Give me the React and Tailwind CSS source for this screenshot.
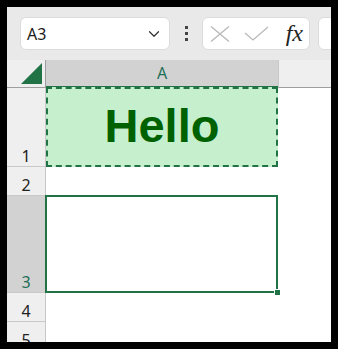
import { ChevronDown } from "lucide-react";

// Excel-style sheet: name box, formula bar, column A with a copied cell and a selected cell.
function RowHead({ n, active, className = "" }) {
  return (
    <div
      className={`flex items-end justify-center border-r border-b border-[#c8c8c8] pb-[1px] text-[16px] leading-none ${
        active ? "bg-[#d2d2d2] text-[#1e6f57]" : "bg-[#efefef] text-[#222]"
      } ${className}`}
    >
      <span className="mb-[1px]">{n}</span>
    </div>
  );
}

export default function App() {
  return (
    <div className="w-[338px] h-[349px] bg-black p-[7px] font-['Segoe_UI','Noto_Sans','Liberation_Sans',sans-serif]">
      <div className="w-[324px] h-[335px] overflow-hidden bg-white flex flex-col">
        {/* toolbar */}
        <div className="h-[53px] shrink-0 bg-[#e9e9e9] flex items-center pl-[13px]">
          <div className="shrink-0 w-[150px] h-[33px] bg-white rounded-[6px] border border-[#dcdcdc] flex items-center pl-[6px] pr-[6px] justify-between">
            <span className="text-[16px] text-[#1b1b1b]">A3</span>
            <ChevronDown size={18} strokeWidth={1.6} className="text-[#333]" />
          </div>
          <div className="shrink-0 w-[32px] flex flex-col items-center gap-[3px]">
            <span className="w-[3px] h-[3px] bg-[#444]" />
            <span className="w-[3px] h-[3px] bg-[#444]" />
            <span className="w-[3px] h-[3px] bg-[#444]" />
          </div>
          <div className="shrink-0 w-[108px] h-[33px] bg-white rounded-[6px] border border-[#dcdcdc] flex items-center pl-[7px] pr-[6px]">
            <svg width="20" height="16" viewBox="0 0 20 16" className="shrink-0">
              <path d="M1 0.5 L19 15.5 M19 0.5 L1 15.5" stroke="#b8b8b8" strokeWidth="1.3" fill="none" />
            </svg>
            <svg width="25" height="15" viewBox="0 0 25 15" className="ml-[14px] shrink-0">
              <path d="M1 7 L9 14 L24 1" stroke="#b8b8b8" strokeWidth="1.3" fill="none" />
            </svg>
            <span className="ml-auto text-[24px] italic text-[#222] font-['Liberation_Serif',serif] leading-none mb-[2px]">fx</span>
          </div>
          <div className="shrink-0 ml-[8px] w-[40px] h-[33px] bg-white rounded-l-[6px] border border-[#dcdcdc]" />
        </div>

        {/* sheet */}
        <div className="grid grid-cols-[39px_232px_1fr] grid-rows-[28px_79px_29px_97px_29px_29px] flex-1">
          <div className="bg-[#efefef] border-r border-b border-[#9e9e9e] flex items-end justify-end pr-[3px] pb-[3px]">
            <svg width="21" height="21" viewBox="0 0 21 21">
              <polygon points="21,0 21,21 0,21" fill="#217346" />
            </svg>
          </div>
          <div className="bg-[#d2d2d2] border-b-2 border-[#217346] flex items-center justify-center text-[16px] text-[#1e6f57]">
            A
          </div>
          <div className="bg-[#efefef] border-b border-[#9e9e9e] border-l border-l-[#c8c8c8]" />

          <RowHead n="1" />
          <div className="bg-[#c6efce] border-2 border-dashed border-[#217346] flex items-center justify-center -mt-[1px]">
            <span className="text-[47px] font-bold text-[#006100] font-['Liberation_Sans',sans-serif] leading-none mb-[4px]">
              Hello
            </span>
          </div>
          <div />

          <RowHead n="2" />
          <div />
          <div />

          <RowHead n="3" active />
          <div className="relative border-2 border-[#217346] -ml-[1px] -mt-[1px]">
            <span className="absolute -right-[5px] -bottom-[5px] w-[7px] h-[7px] bg-[#217346] border border-white" />
          </div>
          <div />

          <RowHead n="4" />
          <div />
          <div />

          <RowHead n="5" />
          <div />
          <div />
        </div>
      </div>
    </div>
  );
}
